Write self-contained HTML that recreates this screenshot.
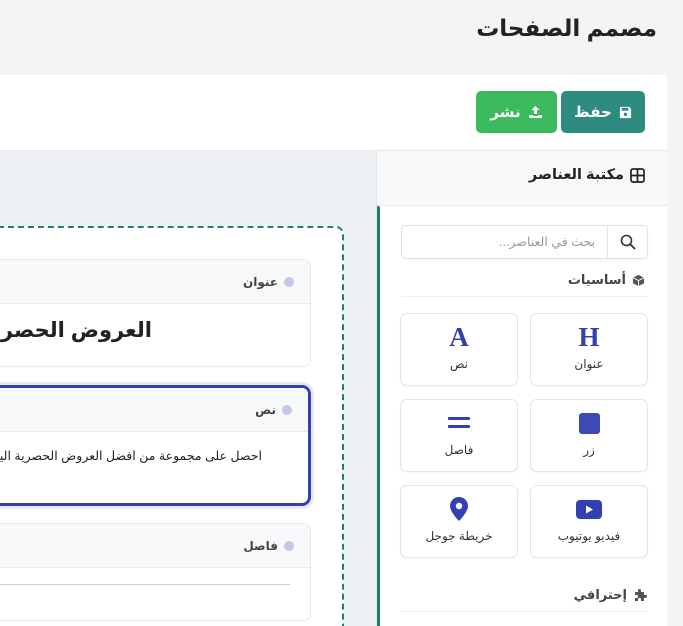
<!DOCTYPE html>
<html dir="rtl"><head><meta charset="utf-8"><style>
*{box-sizing:border-box;margin:0;padding:0}
html{width:683px;height:626px;overflow:hidden}
body{width:683px;height:626px;overflow:hidden;background:#f5f4f2;font-family:"Liberation Sans","DejaVu Sans",sans-serif;position:relative;color:#222}
.abs{position:absolute}
h1{position:absolute;right:26px;top:15px;font-size:23px;font-weight:bold;color:#222;letter-spacing:.5px}
.card{left:0;top:75px;width:667px;height:551px;background:#fff}
.btn{top:91px;height:42px;border-radius:5px;color:#fff;font-size:15px;font-weight:bold;display:flex;align-items:center;justify-content:center;gap:7px}
.canvas{left:0;top:150px;width:376px;height:476px;background:#eef1f4;border-top:1px solid #e6e8eb}
.side{left:376px;top:150px;width:291px;height:476px;background:#fff;border-top:1px solid #e6e8eb;border-left:1px solid #e6e8eb;overflow:hidden}
.sh{left:0;top:0;width:290px;height:55px;background:#f7f8fa;border-bottom:1px solid #e6e8eb}
.frame{left:-20px;top:226px;width:364px;height:420px;background:#fff;border:2px dashed #1f7f73;border-radius:8px}
.blk{left:-20px;width:331px;background:#fff;border:1px solid #e8eaee;border-radius:7px;overflow:hidden}
.bh{height:44px;background:#f7f8fa;border-bottom:1px solid #e8eaee;font-size:12px;font-weight:bold;color:#444;display:flex;align-items:center;padding-right:16px;gap:6px}
.dot{width:10px;height:10px;border-radius:50%;background:#c3c6e6}
.el{width:118px;height:73px;border:1px solid #e3e5ea;border-radius:7px;background:#fff;box-shadow:0 1px 2px rgba(0,0,0,.04)}
.el .ic{position:absolute;left:0;right:0;top:10px;height:26px;display:flex;justify-content:center;align-items:center;color:#3440b0}
.el .t{position:absolute;left:0;right:0;top:43px;text-align:center;font-size:12px;color:#333}
.sec{font-size:13px;font-weight:bold;color:#444;display:flex;align-items:center;gap:6px}
</style></head><body>
<h1>مصمم الصفحات</h1>
<div class="abs card"></div>
<div class="abs btn" style="left:561px;width:84px;background:#2e8b80">
<svg width="13" height="13" viewBox="0 0 14 14"><path d="M1 1h10l2 2v10H1z" fill="#fff"/><rect x="3" y="2" width="7" height="3" fill="#2e8b80"/><circle cx="7" cy="9" r="1.8" fill="#2e8b80"/></svg>حفظ</div>
<div class="abs btn" style="left:476px;width:81px;background:#3cb95c">
<svg width="15" height="14" viewBox="0 0 15 14"><path d="M7.5 1L3.5 5h2.5v4h3V5h2.5z" fill="#fff"/><path d="M1 10h4v3H1zM10 10h4v3h-4zM5 11h5v2H5z" fill="#fff"/></svg>نشر</div>

<div class="abs canvas"></div>
<div class="abs frame"></div>
<div class="abs blk" style="top:259px;height:108px"><div class="bh"><span class="dot"></span>عنوان</div>
<div style="padding:14px 158px 0 0;font-size:21px;font-weight:bold;white-space:nowrap">العروض الحصرية</div></div>
<div class="abs blk" style="top:385px;height:121px;border:3px solid #3340b0;border-radius:9px;box-shadow:0 0 0 3px #e6e8f6"><div class="bh"><span class="dot"></span>نص</div>
<div style="padding:16px 46px 0 0;font-size:12.5px;white-space:nowrap">احصل على مجموعة من افضل العروض الحصرية اليوم</div></div>
<div class="abs blk" style="top:523px;height:98px"><div class="bh"><span class="dot"></span>فاصل</div>
<div style="margin:16px 20px 0 0;border-top:1px solid #ccc"></div></div>

<div class="abs side">
<div class="abs sh"><div class="sec" style="position:absolute;right:22px;top:16px;font-size:14.5px;color:#222">
<svg width="15" height="15" viewBox="0 0 15 15"><rect x="1" y="1" width="13" height="13" rx="2" fill="none" stroke="#222" stroke-width="1.7"/><path d="M7.5 1v13M1 7.5h13" stroke="#222" stroke-width="1.7"/></svg>مكتبة العناصر</div></div>
<div class="abs" style="left:-1px;top:55px;width:4px;height:430px;background:#1f7f73;border-radius:2px"></div>
<div class="abs" style="left:24px;top:74px;width:247px;height:34px;border:1px solid #dfe2e6;border-radius:5px;box-shadow:0 1px 2px rgba(0,0,0,.05)">
<div class="abs" style="right:0;top:0;width:40px;height:32px;border-left:1px solid #dfe2e6;display:flex;align-items:center;justify-content:center">
<svg width="16" height="16" viewBox="0 0 16 16"><circle cx="6.5" cy="6.5" r="5" fill="none" stroke="#333" stroke-width="1.6"/><path d="M10.2 10.2L15 15" stroke="#333" stroke-width="1.8"/></svg></div>
<div class="abs" style="right:52px;top:8px;font-size:12.5px;color:#999">بحث في العناصر...</div></div>
<div class="abs sec" style="right:22px;top:121px">
<svg width="13" height="13" viewBox="0 0 14 14"><path d="M7 1l6 3v6l-6 3-6-3V4z" fill="#555"/><path d="M1 4l6 3 6-3M7 7v6" stroke="#fff" stroke-width="1" fill="none"/></svg>أساسيات</div>
<div class="abs" style="left:24px;top:145px;width:247px;border-top:1px solid #eceef0"></div>

<div class="abs el" style="left:153px;top:162px"><div class="ic" style="font-family:'Liberation Serif',serif;font-size:27px;font-weight:bold">H</div><div class="t">عنوان</div></div>
<div class="abs el" style="left:23px;top:162px"><div class="ic" style="font-family:'Liberation Serif',serif;font-size:27px;font-weight:bold">A</div><div class="t">نص</div></div>
<div class="abs el" style="left:153px;top:248px"><div class="ic"><div style="width:21px;height:21px;background:#3d4ab5;border-radius:3px"></div></div><div class="t">زر</div></div>
<div class="abs el" style="left:23px;top:248px"><div class="ic"><svg width="22" height="12"><rect y="0" width="22" height="3" rx="1" fill="#3440b0"/><rect y="8" width="22" height="3" rx="1" fill="#3440b0"/></svg></div><div class="t">فاصل</div></div>
<div class="abs el" style="left:153px;top:334px"><div class="ic"><svg width="26" height="19" viewBox="0 0 26 19"><rect width="26" height="19" rx="4" fill="#3440b0"/><path d="M10 5.5v8l7-4z" fill="#fff"/></svg></div><div class="t">فيديو يوتيوب</div></div>
<div class="abs el" style="left:23px;top:334px"><div class="ic"><svg width="18" height="24" viewBox="0 0 18 24"><path d="M9 0C4 0 0 4 0 9c0 6 9 15 9 15s9-9 9-15c0-5-4-9-9-9z" fill="#3440b0"/><circle cx="9" cy="9" r="3.2" fill="#fff"/></svg></div><div class="t">خريطة جوجل</div></div>

<div class="abs sec" style="right:20px;top:436px">
<svg width="14" height="14" viewBox="0 0 14 14"><path d="M2 4h3V2.5a1.5 1.5 0 013 0V4h3v3h1.5a1.5 1.5 0 010 3H11v3H8v-1.5a1.5 1.5 0 00-3 0V13H2v-3h1.5a1.5 1.5 0 000-3H2z" fill="#555"/></svg>إحترافي</div>
<div class="abs" style="left:24px;top:460px;width:247px;border-top:1px solid #eceef0"></div>
</div>
</body></html>
